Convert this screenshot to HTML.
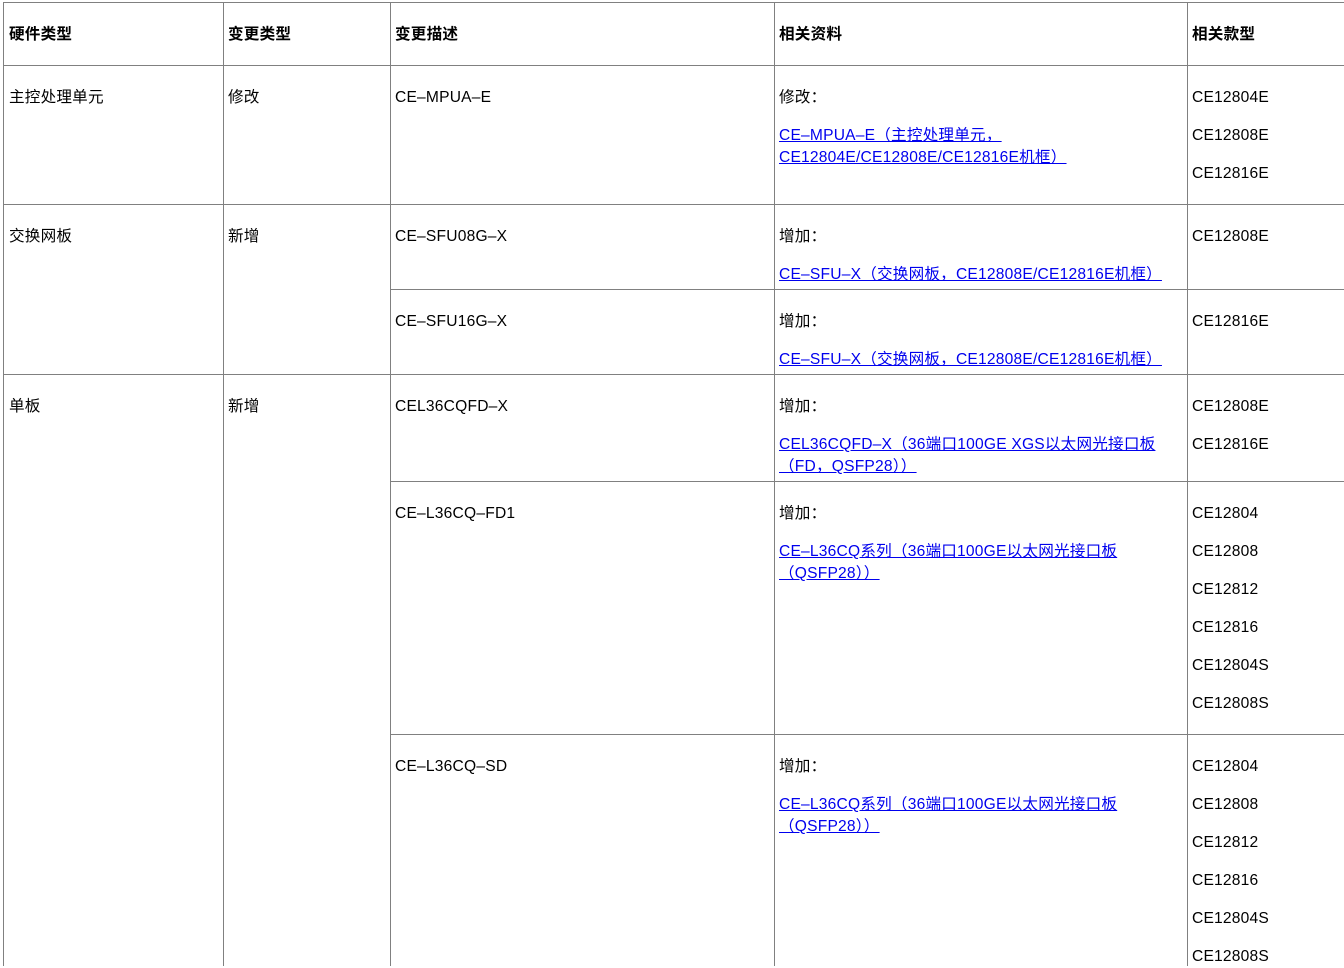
<!DOCTYPE html><html><head><meta charset="utf-8"><style>
body{margin:0;width:1344px;height:966px;overflow:hidden;background:#fff;font-family:"Liberation Sans","Noto Sans CJK SC",sans-serif;font-size:15.6px;color:#000}
.v{position:absolute;width:1px;background:#808080}
.h{position:absolute;height:1px;background:#808080}
.t{position:absolute;line-height:22px;white-space:nowrap;margin-top:1px;letter-spacing:0.2px}
.b{font-weight:bold}
a{color:#0000ee;text-decoration:underline}
</style></head><body>
<div class="h" style="left:3px;width:1341px;top:2px"></div>
<div class="h" style="left:3px;width:1341px;top:65px"></div>
<div class="h" style="left:3px;width:1341px;top:204px"></div>
<div class="h" style="left:390px;width:954px;top:289px"></div>
<div class="h" style="left:3px;width:1341px;top:374px"></div>
<div class="h" style="left:390px;width:954px;top:481px"></div>
<div class="h" style="left:390px;width:954px;top:734px"></div>
<div class="v" style="left:3px;top:2px;height:964px"></div>
<div class="v" style="left:223px;top:2px;height:964px"></div>
<div class="v" style="left:390px;top:2px;height:964px"></div>
<div class="v" style="left:774px;top:2px;height:964px"></div>
<div class="v" style="left:1187px;top:2px;height:964px"></div>

<div class="t b" style="left:9px;top:23px">硬件类型</div>
<div class="t b" style="left:228px;top:23px">变更类型</div>
<div class="t b" style="left:395px;top:23px">变更描述</div>
<div class="t b" style="left:779px;top:23px">相关资料</div>
<div class="t b" style="left:1192px;top:23px">相关款型</div>

<div class="t" style="left:9px;top:86px">主控处理单元</div>
<div class="t" style="left:228px;top:86px">修改</div>
<div class="t" style="left:395px;top:86px">CE–MPUA–E</div>
<div class="t" style="left:779px;top:86px">修改：</div>
<div class="t" style="left:779px;top:124px"><a>CE–MPUA–E（主控处理单元，<br>CE12804E/CE12808E/CE12816E机框）</a></div>
<div class="t" style="left:1192px;top:86px">CE12804E</div>
<div class="t" style="left:1192px;top:124px">CE12808E</div>
<div class="t" style="left:1192px;top:162px">CE12816E</div>

<div class="t" style="left:9px;top:225px">交换网板</div>
<div class="t" style="left:228px;top:225px">新增</div>
<div class="t" style="left:395px;top:225px">CE–SFU08G–X</div>
<div class="t" style="left:779px;top:225px">增加：</div>
<div class="t" style="left:779px;top:263px"><a>CE–SFU–X（交换网板，CE12808E/CE12816E机框）</a></div>
<div class="t" style="left:1192px;top:225px">CE12808E</div>

<div class="t" style="left:395px;top:310px">CE–SFU16G–X</div>
<div class="t" style="left:779px;top:310px">增加：</div>
<div class="t" style="left:779px;top:348px"><a>CE–SFU–X（交换网板，CE12808E/CE12816E机框）</a></div>
<div class="t" style="left:1192px;top:310px">CE12816E</div>

<div class="t" style="left:9px;top:395px">单板</div>
<div class="t" style="left:228px;top:395px">新增</div>
<div class="t" style="left:395px;top:395px">CEL36CQFD–X</div>
<div class="t" style="left:779px;top:395px">增加：</div>
<div class="t" style="left:779px;top:433px"><a>CEL36CQFD–X（36端口100GE XGS以太网光接口板<br>（FD，QSFP28））</a></div>
<div class="t" style="left:1192px;top:395px">CE12808E</div>
<div class="t" style="left:1192px;top:433px">CE12816E</div>

<div class="t" style="left:395px;top:502px">CE–L36CQ–FD1</div>
<div class="t" style="left:779px;top:502px">增加：</div>
<div class="t" style="left:779px;top:540px"><a>CE–L36CQ系列（36端口100GE以太网光接口板<br>（QSFP28））</a></div>
<div class="t" style="left:1192px;top:502px">CE12804</div>
<div class="t" style="left:1192px;top:540px">CE12808</div>
<div class="t" style="left:1192px;top:578px">CE12812</div>
<div class="t" style="left:1192px;top:616px">CE12816</div>
<div class="t" style="left:1192px;top:654px">CE12804S</div>
<div class="t" style="left:1192px;top:692px">CE12808S</div>

<div class="t" style="left:395px;top:755px">CE–L36CQ–SD</div>
<div class="t" style="left:779px;top:755px">增加：</div>
<div class="t" style="left:779px;top:793px"><a>CE–L36CQ系列（36端口100GE以太网光接口板<br>（QSFP28））</a></div>
<div class="t" style="left:1192px;top:755px">CE12804</div>
<div class="t" style="left:1192px;top:793px">CE12808</div>
<div class="t" style="left:1192px;top:831px">CE12812</div>
<div class="t" style="left:1192px;top:869px">CE12816</div>
<div class="t" style="left:1192px;top:907px">CE12804S</div>
<div class="t" style="left:1192px;top:945px">CE12808S</div>
</body></html>
